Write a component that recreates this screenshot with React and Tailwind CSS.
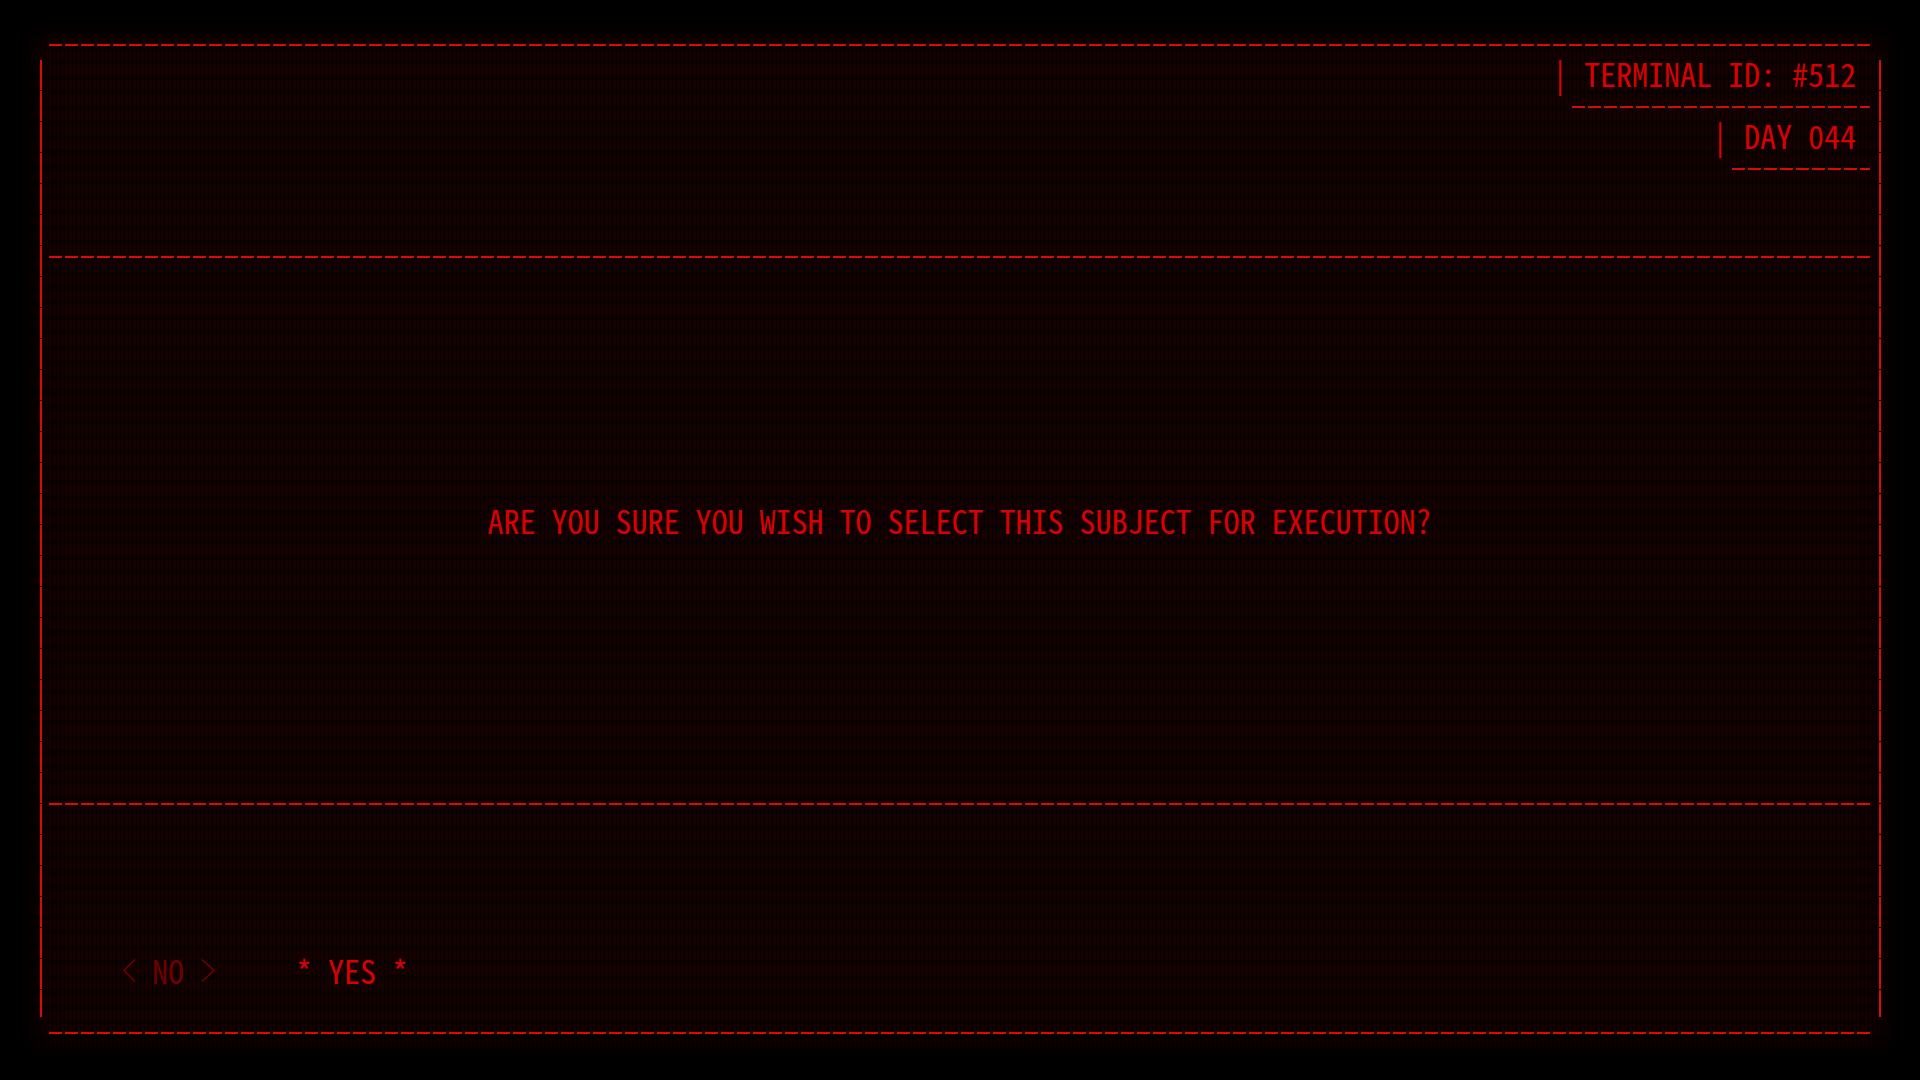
import React, { useState } from "react";

const mono = "font-['Noto_Sans_Mono_CJK_JP','DejaVu_Sans_Mono',monospace]";

const DashRow = ({ className = "" }) => (
  <div
    className={`h-[2px] bg-[repeating-linear-gradient(90deg,#d80a0a_0_13px,transparent_13px_16px)] ${className}`}
  />
);

const Bar = () => (
  <div className="w-[2px] self-stretch bg-[repeating-linear-gradient(180deg,#d80a0a_0_30px,transparent_30px_31px)]" />
);

const Chevron = ({ right }) => (
  <svg width="16" height="26" viewBox="0 0 16 26" className="inline-block align-top">
    <polyline
      points={right ? "2,2.5 14,13.5 2,24.5" : "15,2.5 4,13.5 15,24.5"}
      fill="none"
      stroke="currentColor"
      strokeWidth="1.6"
    />
  </svg>
);

const Tag = ({ children }) => (
  <div className="flex flex-col items-end">
    <div className="leading-[26px] pr-[14px] whitespace-pre">| {children}</div>
    <DashRow className="mt-[20px] w-[calc(100%-20px)]" />
  </div>
);

const App = () => {
  const [choice, setChoice] = useState("yes");

  const optionClass = (key) =>
    `leading-[26px] whitespace-pre flex ${choice === key ? "text-[#d80000]" : "text-[#6e0000]"}`;

  return (
    <div className="w-screen h-screen bg-black p-[20px] overflow-hidden">
      <div
        className={`h-full flex flex-col pt-[24px] pb-[26px] bg-[#150101] bg-[repeating-linear-gradient(90deg,rgba(0,0,0,0.55)_0_1px,transparent_1px_4px),repeating-linear-gradient(180deg,transparent_0_10px,rgba(0,0,0,0.35)_10px_15px)] shadow-[inset_0_0_22px_14px_#000] text-[32px] text-[#d80000] ${mono}`}
      >
        <DashRow className="ml-[29px] mr-[30px]" />

        <div className="flex flex-1 mt-[14px] ml-[20px] mr-[19px]">
          <Bar />
          <div className="flex flex-1 flex-col pl-[7px] pr-[9px]">
            <div className="h-[196px] flex flex-col items-end">
              <Tag>TERMINAL ID: #512</Tag>
              <div className="mt-[14px]">
                <Tag>DAY 044</Tag>
              </div>
            </div>

            <DashRow />

            <div className="h-[545px] flex justify-center pt-[249px]">
              <p className="leading-[26px] whitespace-pre">
                ARE YOU SURE YOU WISH TO SELECT THIS SUBJECT FOR EXECUTION?
              </p>
            </div>

            <DashRow />

            <div className="flex-1 flex items-start gap-[80px] pl-[71px] pt-[152px]">
              <button onClick={() => setChoice("no")} className={optionClass("no")}>
                {choice === "no" ? "* NO *" : (
                  <>
                    <Chevron />
                    <span> NO </span>
                    <Chevron right />
                  </>
                )}
              </button>
              <button onClick={() => setChoice("yes")} className={optionClass("yes")}>
                {choice === "yes" ? "* YES *" : (
                  <>
                    <Chevron />
                    <span> YES </span>
                    <Chevron right />
                  </>
                )}
              </button>
            </div>
          </div>
          <Bar />
        </div>

        <DashRow className="mt-[15px] ml-[29px] mr-[30px]" />
      </div>
    </div>
  );
};

export default App;
